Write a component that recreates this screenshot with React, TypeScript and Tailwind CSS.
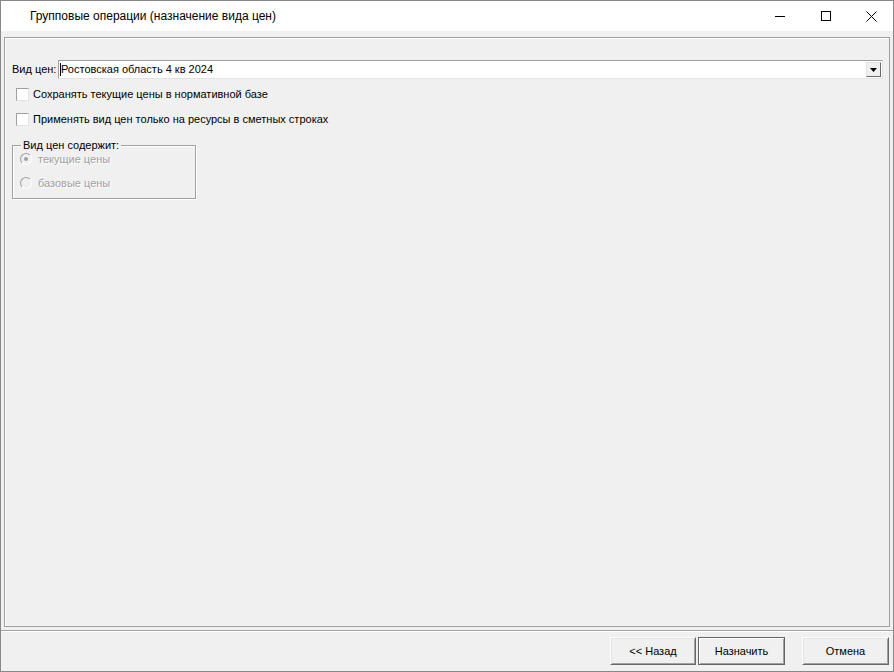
import React from 'react';

const ui = { fontFamily: '"Liberation Sans", Arial, sans-serif' };

const WinButton: React.FC<{ label: string; isDefault?: boolean; className?: string }> = ({ label, isDefault, className }) => (
  <div
    className={`h-[28px] flex items-center justify-center text-[11px] text-black bg-[#f0f0f0] ${
      isDefault ? 'border border-[#646464] shadow-[inset_1px_1px_0_#ffffff,inset_-1px_-1px_0_#a0a0a0]' : 'border border-t-white border-l-white border-r-[#696969] border-b-[#696969] shadow-[inset_1px_1px_0_#e3e3e3,inset_-1px_-1px_0_#a0a0a0]'
    } ${className ?? ''}`}
  >
    {label}
  </div>
);

const CheckRow: React.FC<{ label: string }> = ({ label }) => (
  <div className="flex items-center h-[13px] pl-[4px]">
    <div className="w-[13px] h-[13px] bg-white border border-t-[#a0a0a0] border-l-[#a0a0a0] border-r-[#e3e3e3] border-b-[#e3e3e3]" />
    <span className="ml-[4px] text-[11px] text-black leading-none">{label}</span>
  </div>
);

const Radio: React.FC<{ label: string; checked?: boolean }> = ({ label, checked }) => (
  <div className="flex items-center h-[12px]">
    <div className="w-[12px] h-[12px] rounded-full bg-[#f0f0f0] border border-t-[#a0a0a0] border-l-[#a0a0a0] border-r-white border-b-white flex items-center justify-center">
      {checked && <div className="w-[4px] h-[4px] rounded-full bg-[#a0a0a0]" />}
    </div>
    <span className="ml-[6px] text-[11px] leading-none text-[#a0a0a0] [text-shadow:1px_1px_0_#ffffff]">{label}</span>
  </div>
);

export default function App() {
  return (
    <div className="w-[894px] h-[672px] flex flex-col border border-[#888888] bg-[#f0f0f0] overflow-hidden" style={ui}>
      {/* Title bar */}
      <div className="h-[30px] bg-white flex items-center shrink-0">
        <span className="pl-[29px] text-[12px] text-black">
          Групповые операции (назначение вида цен)
        </span>
        <div className="ml-auto flex h-full">
          <div className="w-[46px] h-full flex items-center justify-center">
            <svg width="10" height="10" viewBox="0 0 10 10">
              <path d="M0 5.5H10" stroke="#000" strokeWidth="1" />
            </svg>
          </div>
          <div className="w-[46px] h-full flex items-center justify-center">
            <svg width="10" height="10" viewBox="0 0 10 10">
              <rect x="0.5" y="0.5" width="9" height="9" fill="none" stroke="#000" strokeWidth="1" />
            </svg>
          </div>
          <div className="w-[44px] h-full flex items-center justify-center">
            <svg width="11" height="11" viewBox="0 0 11 11">
              <path d="M0.5 0.5L10.5 10.5M10.5 0.5L0.5 10.5" stroke="#000" strokeWidth="1" />
            </svg>
          </div>
        </div>
      </div>

      {/* Content */}
      <div className="flex-1 flex flex-col">
        <div className="flex-1 mt-[6px] mx-[3px] mb-[3px] border border-[#a0a0a0] shadow-[inset_1px_1px_0_#ffffff] flex flex-col pt-[22px] pl-[7px] pr-[6px]">
          {/* Price type combo */}
          <div className="flex items-center h-[19px]">
            <span className="text-[11px] text-black w-[46px]">Вид цен:</span>
            <div className="flex-1 h-[19px] bg-white border border-t-[#a0a0a0] border-l-[#a0a0a0] border-r-[#e3e3e3] border-b-[#e3e3e3] flex items-center pr-[1px]">
              <div className="ml-[1px] w-[1px] h-[13px] bg-black" />
              <span className="text-[11px] text-black leading-none">Ростовская область 4 кв 2024</span>
              <div className="ml-auto w-[15px] h-[15px] bg-[#f0f0f0] border border-t-[#e3e3e3] border-l-[#e3e3e3] border-r-[#696969] border-b-[#696969] flex items-center justify-center">
                <svg width="7" height="4" viewBox="0 0 7 4">
                  <path d="M0 0H7L3.5 4Z" fill="#000" />
                </svg>
              </div>
            </div>
          </div>

          <div className="mt-[9px]">
            <CheckRow label="Сохранять текущие цены в нормативной базе" />
          </div>
          <div className="mt-[12px]">
            <CheckRow label="Применять вид цен только на ресурсы в сметных строках" />
          </div>

          {/* Group box */}
          <div className="relative mt-[19px] w-[184px] h-[54px] border border-[#a0a0a0] shadow-[inset_1px_1px_0_#ffffff,1px_1px_0_#ffffff] pt-[7px] pl-[7px] flex flex-col">
            <span className="absolute -top-[8px] left-[8px] px-[2px] bg-[#f0f0f0] text-[11px] text-black leading-[14px]">
              Вид цен содержит:
            </span>
            <Radio label="текущие цены" checked />
            <div className="mt-[12px]">
              <Radio label="базовые цены" />
            </div>
          </div>
        </div>

        {/* Separator */}
        <div className="h-[1px] bg-[#a0a0a0]" />
        <div className="h-[1px] bg-white" />

        {/* Buttons */}
        <div className="h-[39px] flex items-start pt-[5px] pr-[4px]">
          <div className="ml-auto flex">
            <WinButton label="<< Назад" className="w-[86px]" />
            <WinButton label="Назначить" isDefault className="w-[87px] ml-[2px]" />
            <WinButton label="Отмена" className="w-[87px] ml-[17px]" />
          </div>
        </div>
      </div>
    </div>
  );
}
